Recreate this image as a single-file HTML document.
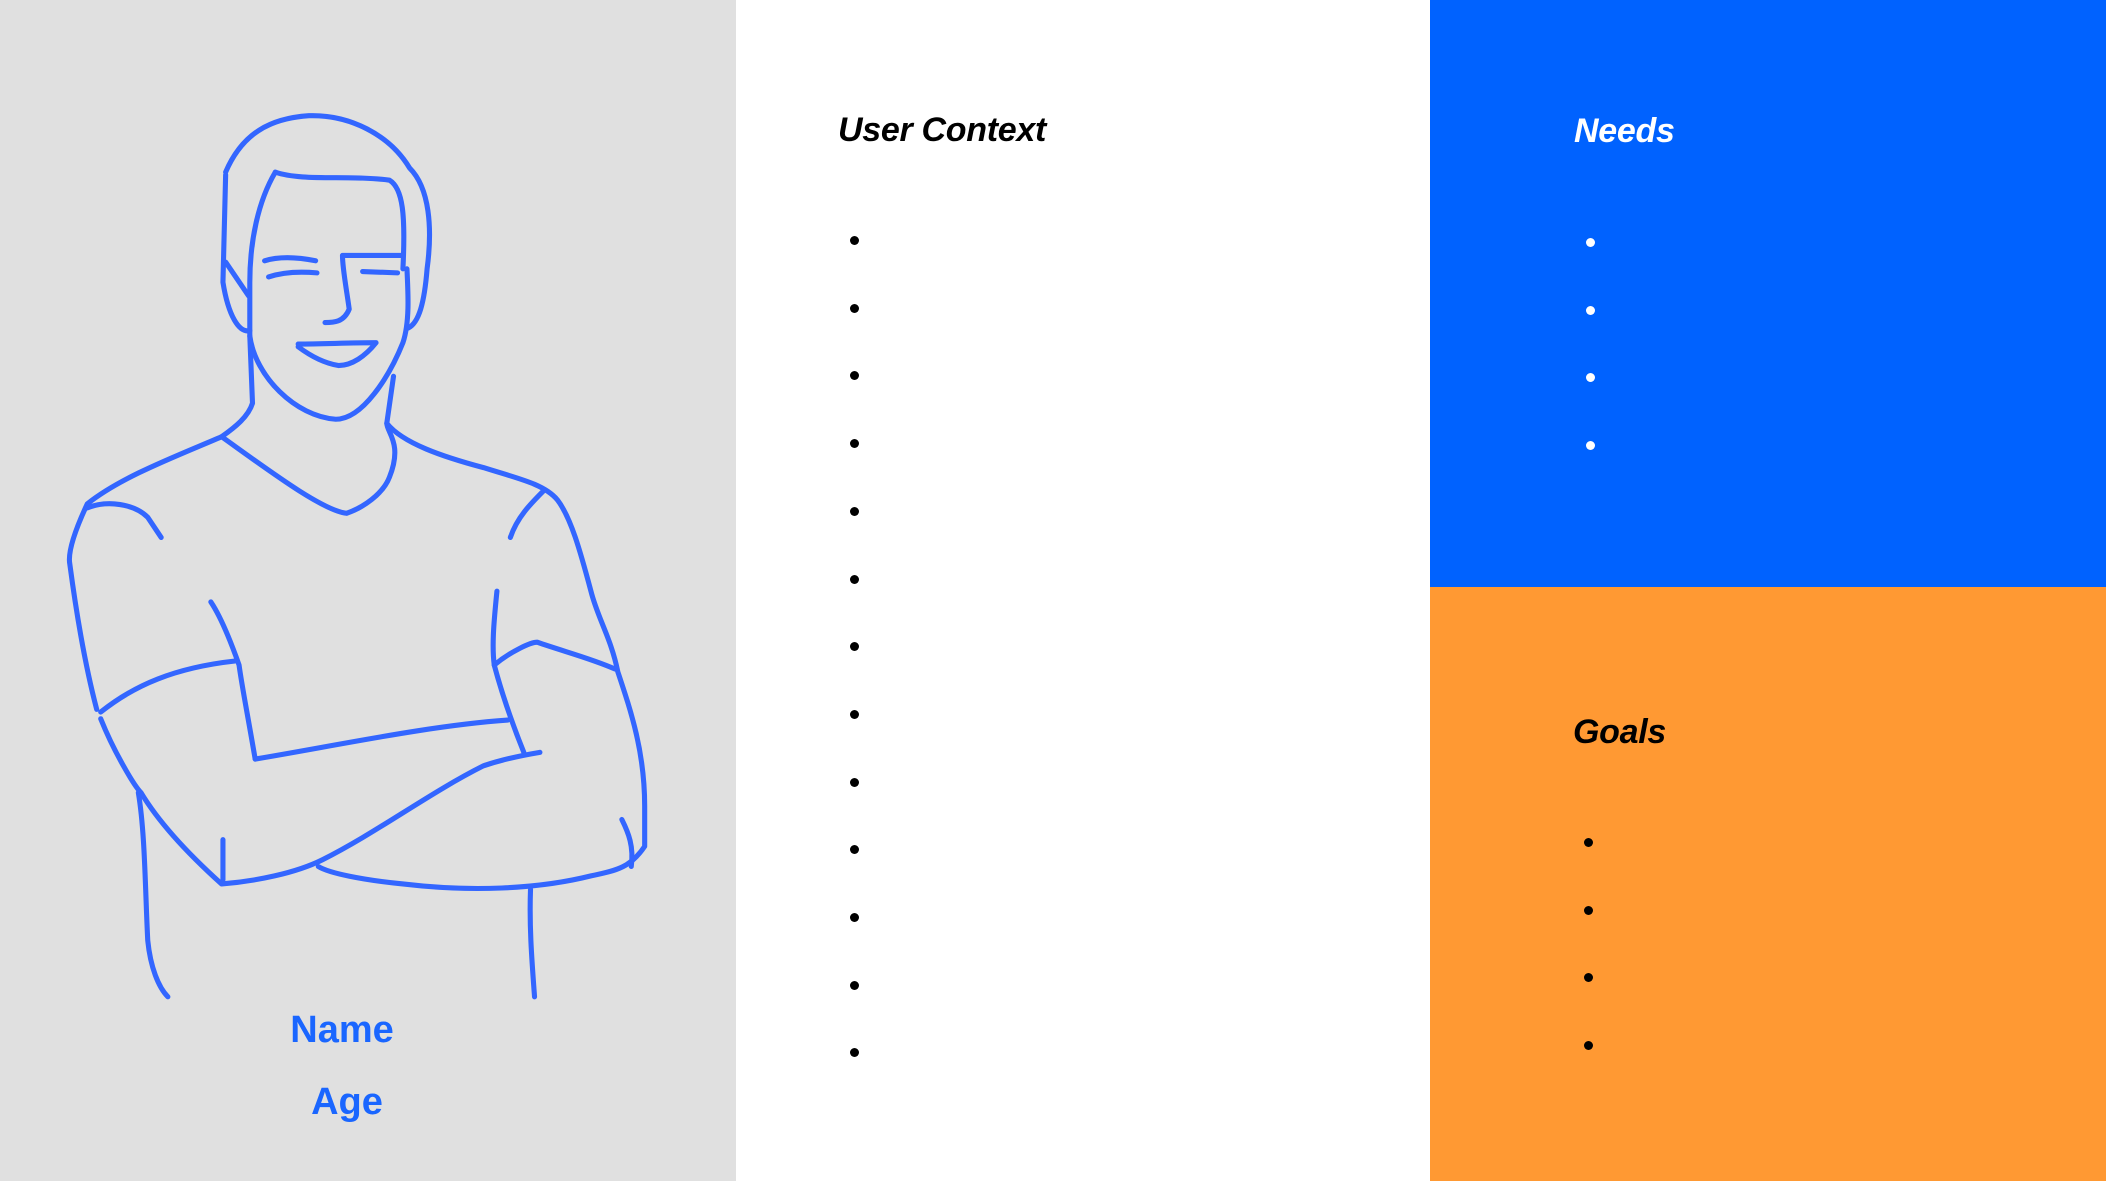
<!DOCTYPE html>
<html><head><meta charset="utf-8"><style>
html,body{margin:0;padding:0;width:2106px;height:1181px;overflow:hidden;font-family:"Liberation Sans",sans-serif}
.p{position:absolute}
.t{position:absolute;font-weight:bold;font-style:italic;font-size:34px;line-height:1;letter-spacing:-0.3px}
.d{position:absolute;width:9px;height:9px;border-radius:50%}
</style></head><body>
<div class="p" style="left:0;top:0;width:736px;height:1181px;background:#e0e0e0"></div>
<div class="p" style="left:736px;top:0;width:694px;height:1181px;background:#fff"></div>
<div class="p" style="left:1430px;top:0;width:676px;height:587px;background:#0062ff"></div>
<div class="p" style="left:1430px;top:587px;width:676px;height:594px;background:#ff9933"></div>

<svg class="p" style="left:0;top:0" width="736" height="1181" viewBox="0 0 548 879" fill="none" stroke="#3366ff" stroke-width="3.8" stroke-linecap="round" stroke-linejoin="round">
<path d="M168 128 C180 100 200 88 230 86 C260 85 290 100 305 125 C320 140 322 170 318 200 C316 225 312 240 304 244"/>
<path d="M168 130 L166 210 C170 235 178 248 186 246"/>
<path d="M205 128 C225 135 260 130 290 134 C300 140 302 160 300 200"/>
<path d="M205 128 C192 150 186 180 186 210 L186 250 C190 280 220 310 250 312 C270 312 290 280 300 255 C305 240 304 220 303 200"/>
<path d="M168 195 L185 220"/>
<path d="M197 194 C210 190 225 192 235 194 M200 206 C212 202 225 202 236 203 M255 190 L300 190 M255 190 C255 200 258 215 260 230 C256 240 248 240 242 240 M270 202 L296 203"/>
<path d="M222 256 C240 256 260 255 280 255 C272 265 262 272 252 272 C240 270 230 264 222 258"/>
<path d="M186 250 L188 300 C185 310 175 318 165 325"/>
<path d="M293 280 L288 315 C288 322 300 330 290 355 C285 368 270 378 258 382 C240 380 200 350 165 325"/>
<path d="M288 315 C300 330 330 340 360 348 C385 356 405 360 415 372 C425 385 432 410 440 440 C445 460 455 475 460 500 C470 530 480 560 480 600 L480 630 C470 645 460 648 440 652 C400 662 350 664 300 658 C270 655 245 650 237 645"/>
<path d="M165 325 C130 340 90 355 65 375 C58 390 50 410 52 420 C56 450 62 490 72 528"/>
<path d="M65 378 C80 372 100 375 110 385 L120 400"/>
<path d="M405 365 C395 375 385 385 380 400"/>
<path d="M157 448 C165 460 172 478 178 495 C180 510 184 530 190 565"/>
<path d="M75 530 C100 510 130 497 175 492"/>
<path d="M370 440 C368 460 366 480 368 495 C380 485 395 478 400 478 C420 485 440 490 458 498"/>
<path d="M368 495 C372 510 380 535 390 560"/>
<path d="M190 565 C250 555 320 540 378 536"/>
<path d="M75 535 C85 560 100 585 105 590 C120 615 145 640 165 658 C190 656 220 650 240 640 C280 620 320 590 360 570 C375 565 390 562 402 560"/>
<path d="M166 625 L166 655"/>
<path d="M463 610 C468 620 472 630 470 645"/>
<path d="M103 590 C108 620 108 660 110 700 C112 720 118 735 125 742"/>
<path d="M395 662 C394 690 396 715 398 742"/>
</svg>

<div class="p" style="left:0;width:684px;top:1010px;text-align:center;color:#1a66ff;font-weight:bold;font-size:38px;line-height:40px">Name</div>
<div class="p" style="left:0;width:694px;top:1082px;text-align:center;color:#1a66ff;font-weight:bold;font-size:38px;line-height:40px">Age</div>

<div class="t" style="left:838px;top:113px;color:#000">User Context</div>
<div class="t" style="left:1574px;top:114px;color:#fff">Needs</div>
<div class="t" style="left:1573px;top:715px;color:#000">Goals</div>

<div id="b"></div>
<script>
var h='';
for(var i=0;i<13;i++){h+='<div class="d" style="left:850px;top:'+(236+i*67.7)+'px;background:#000"></div>';}
for(var i=0;i<4;i++){h+='<div class="d" style="left:1586px;top:'+(238+i*67.7)+'px;background:#fff"></div>';}
for(var i=0;i<4;i++){h+='<div class="d" style="left:1584px;top:'+(838+i*67.7)+'px;background:#000"></div>';}
document.getElementById('b').innerHTML=h;
</script>
</body></html>
